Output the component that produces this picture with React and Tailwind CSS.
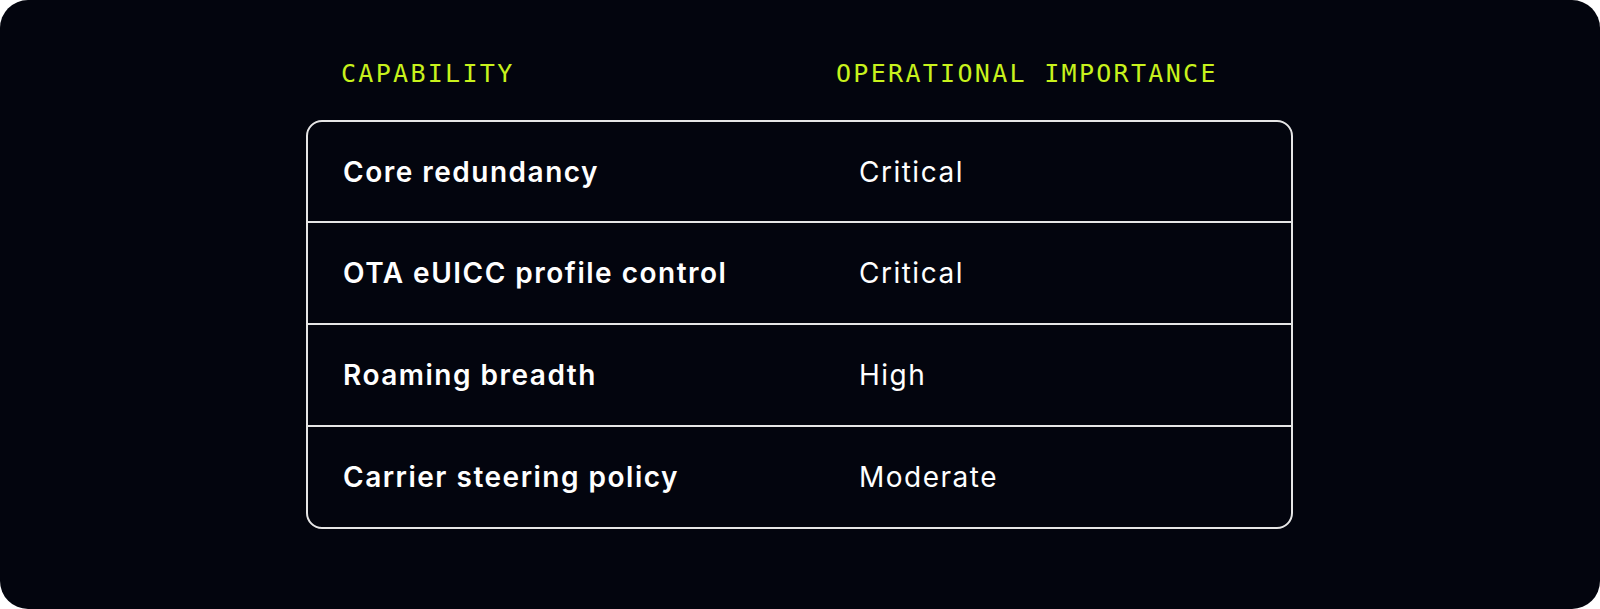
const rows = [
  ['Core redundancy', 'Critical'],
  ['OTA eUICC profile control', 'Critical'],
  ['Roaming breadth', 'High'],
  ['Carrier steering policy', 'Moderate'],
]

export default function App() {
  return (
    <div className="w-[1600px] h-[609px] bg-white">
      <div className="w-full h-full bg-[#03050e] rounded-[28px] pl-[306px] pt-[56px]">
        <div className="w-[987px]">
          {/* column headings */}
          <div
            className="flex items-center h-[34px] pl-[35px] text-[25px] leading-none tracking-[2.3px] text-[#c8f21c]"
            style={{ fontFamily: '"DejaVu Sans Mono", monospace' }}
          >
            <div className="w-[495px]">CAPABILITY</div>
            <div>OPERATIONAL IMPORTANCE</div>
          </div>

          <div
            className="mt-[30px] border-2 border-[#e6e6e6] rounded-[16px] text-white"
            style={{ fontFamily: 'Inter, "Noto Sans", sans-serif' }}
          >
            {rows.map(([cap, imp], i) => (
              <div
                key={cap}
                className={`flex items-center px-[35px] text-[28px] tracking-[1.5px] ${i > 0 ? 'h-[102px] border-t-2 border-[#e6e6e6]' : 'h-[99px]'}`}
              >
                <div className="w-[516px] font-semibold">{cap}</div>
                <div className="font-normal">{imp}</div>
              </div>
            ))}
          </div>
        </div>
      </div>
    </div>
  )
}
